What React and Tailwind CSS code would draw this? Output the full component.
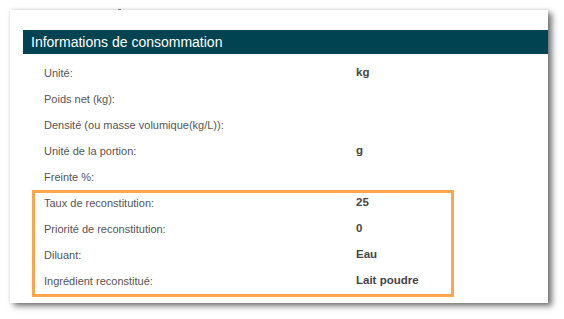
const rows = [
  { label: 'Unité:', value: 'kg' },
  { label: 'Poids net (kg):', value: '' },
  { label: 'Densité (ou masse volumique(kg/L)):', value: '' },
  { label: 'Unité de la portion:', value: 'g' },
  { label: 'Freinte %:', value: '' },
];

const reconstitution = [
  { label: 'Taux de reconstitution:', value: '25' },
  { label: 'Priorité de reconstitution:', value: '0' },
  { label: 'Diluant:', value: 'Eau' },
  { label: 'Ingrédient reconstitué:', value: 'Lait poudre' },
];

function Row({ label, value }) {
  return (
    <div className="flex items-center h-[26px]">
      <span className="w-[312px] shrink-0 text-[11px] text-[#555]">{label}</span>
      <span className="text-[11.5px] font-bold text-[#444]">{value}</span>
    </div>
  );
}

export default function App() {
  return (
    <div className="w-[564px] h-[319px] bg-white pt-[10px] pl-[10px] font-['Liberation_Sans',Arial,sans-serif] relative">
      <span className="absolute left-[118px] top-[9px] w-[3px] h-[1px] bg-[#6b7a8a]" />
      <div className="w-[538px] h-[293px] bg-white shadow-[4px_3px_6px_rgba(0,0,0,0.55),0_0_3px_rgba(0,0,0,0.12)] pt-[20px] pl-[13px]">
        <div className="h-[24px] bg-[#024352] flex items-center pl-[8px] text-white text-[14px]">
          Informations de consommation
        </div>
        <div className="pt-[6px] pl-[21px]">
          {rows.map((r) => (
            <Row key={r.label} {...r} />
          ))}
        </div>
        <div className="ml-[9px] w-[422px] border-[3px] border-[#ffa64d] pl-[9px]">
          <div className="-mt-[3px]">
            {reconstitution.map((r) => (
              <Row key={r.label} {...r} />
            ))}
          </div>
        </div>
      </div>
    </div>
  );
}
